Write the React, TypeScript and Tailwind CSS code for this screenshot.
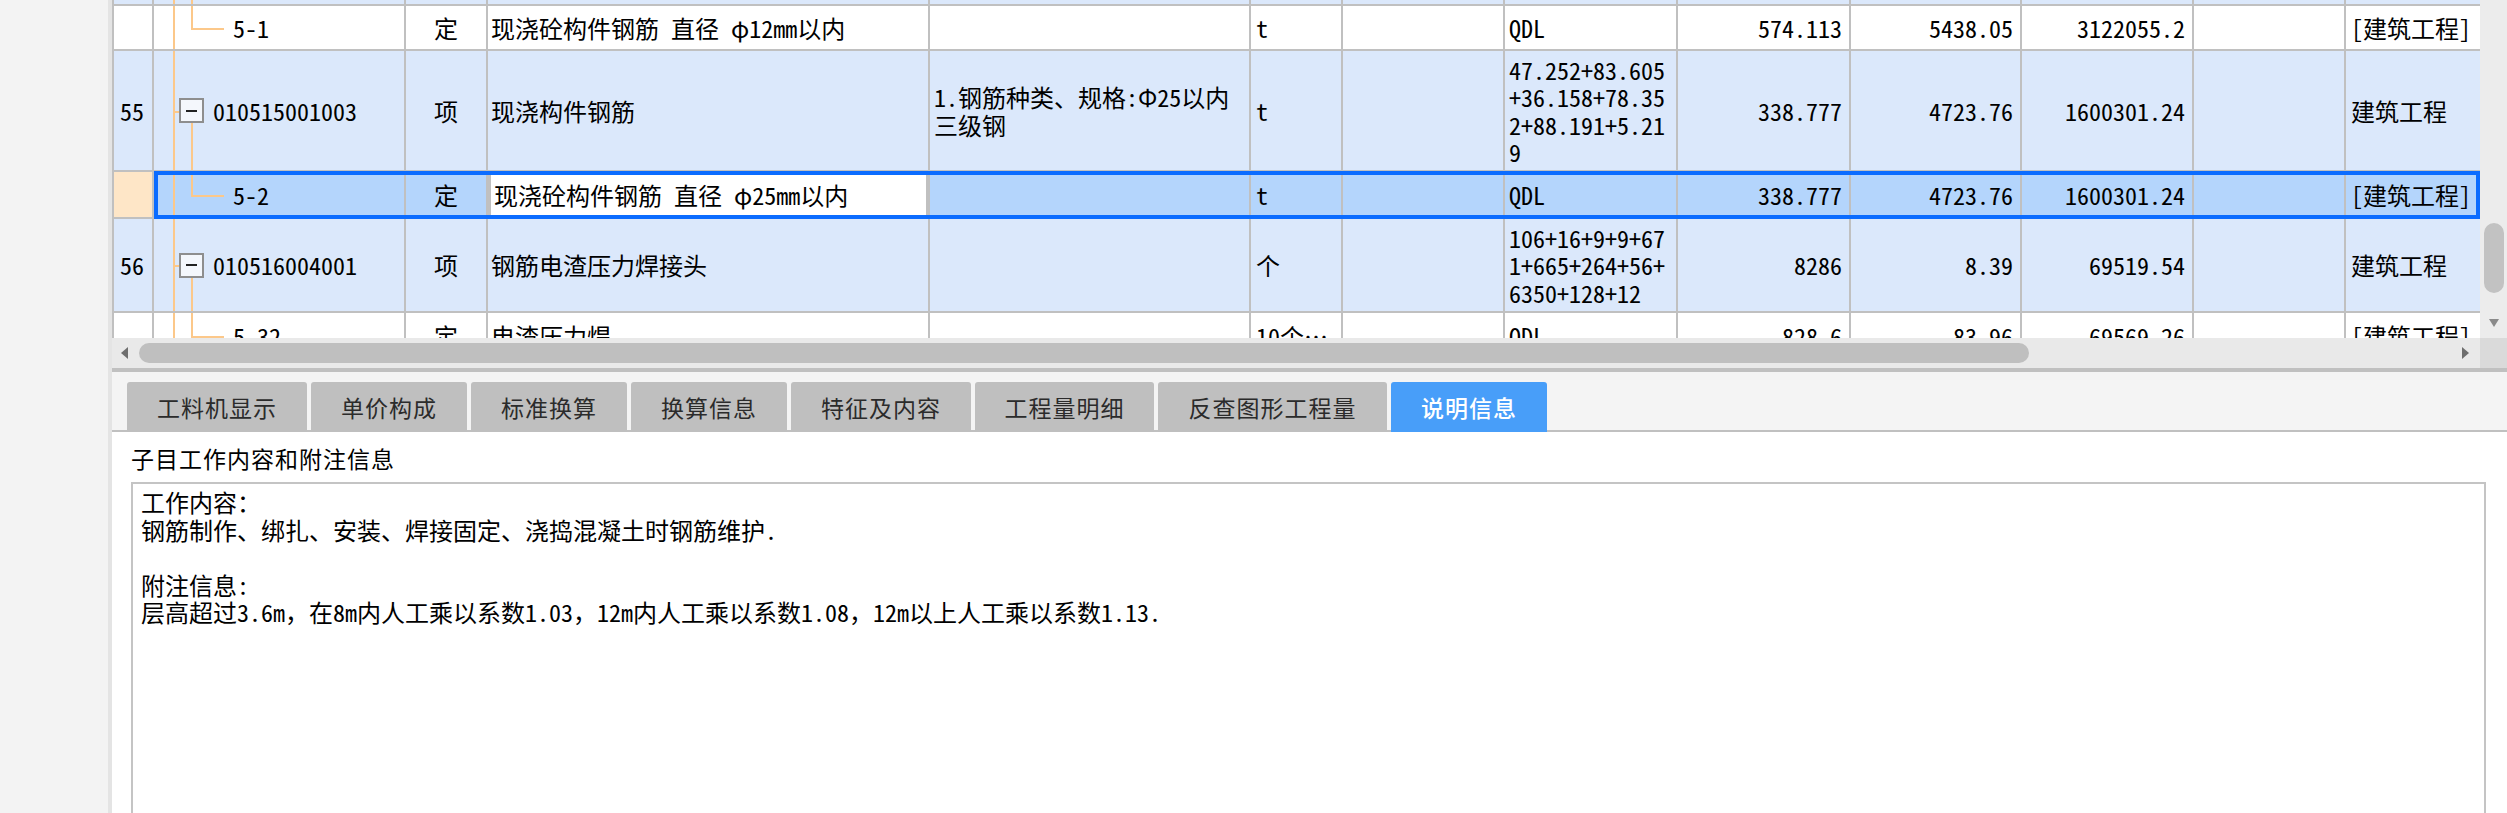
import React from "react";

const mono = "font-['Noto_Sans_Mono_CJK_SC','Noto_Sans_CJK_SC','Liberation_Mono',monospace]";
const sans = "font-['Noto_Sans_CJK_SC','Noto_Sans',sans-serif]";

type Row = {
  h: string;
  bg: string;
  num?: string;
  kind: "item" | "child" | "stub";
  code?: string;
  type?: string;
  name?: string;
  feature?: string[];
  unit?: string;
  expr?: string[];
  qty?: string;
  price?: string;
  total?: string;
  cat?: string;
  selected?: boolean;
};

const rows: Row[] = [
  { h: "h-[6px]", bg: "bg-[#dbe8fb]", kind: "stub" },
  {
    h: "h-[45px]",
    bg: "bg-white",
    kind: "child",
    code: "5-1",
    type: "定",
    name: "现浇砼构件钢筋 直径 φ12mm以内",
    unit: "t",
    expr: ["QDL"],
    qty: "574.113",
    price: "5438.05",
    total: "3122055.2",
    cat: "[建筑工程]",
  },
  {
    h: "h-[121px]",
    bg: "bg-[#dbe8fb]",
    num: "55",
    kind: "item",
    code: "010515001003",
    type: "项",
    name: "现浇构件钢筋",
    feature: ["1.钢筋种类、规格:Φ25以内", "三级钢"],
    unit: "t",
    expr: ["47.252+83.605", "+36.158+78.35", "2+88.191+5.21", "9"],
    qty: "338.777",
    price: "4723.76",
    total: "1600301.24",
    cat: "建筑工程",
  },
  {
    h: "h-[47px]",
    bg: "bg-[#b4d5fc]",
    kind: "child",
    code: "5-2",
    type: "定",
    name: "现浇砼构件钢筋 直径 φ25mm以内",
    unit: "t",
    expr: ["QDL"],
    qty: "338.777",
    price: "4723.76",
    total: "1600301.24",
    cat: "[建筑工程]",
    selected: true,
  },
  {
    h: "h-[94px]",
    bg: "bg-[#dbe8fb]",
    num: "56",
    kind: "item",
    code: "010516004001",
    type: "项",
    name: "钢筋电渣压力焊接头",
    unit: "个",
    expr: ["106+16+9+9+67", "1+665+264+56+", "6350+128+12"],
    qty: "8286",
    price: "8.39",
    total: "69519.54",
    cat: "建筑工程",
  },
  {
    h: "h-[48px]",
    bg: "bg-white",
    kind: "child",
    code: "5-32",
    type: "定",
    name: "电渣压力焊",
    unit: "10个…",
    expr: ["QDL"],
    qty: "828.6",
    price: "83.96",
    total: "69569.26",
    cat: "[建筑工程]",
  },
];

const cell = "shrink-0 h-full border-r-2 border-[#c0c0c0] flex items-center overflow-hidden";

function TreeCell({ r }: { r: Row }) {
  return (
    <div className={`${cell} relative w-[252px] whitespace-nowrap`}>
      <div className="absolute left-[19px] top-0 bottom-0 w-[2px] bg-[#fcc88a]" />
      {r.kind === "stub" && <div className="absolute left-[37px] top-0 bottom-0 w-[2px] bg-[#fcc88a]" />}
      {r.kind === "item" && (
        <>
          <div className="absolute left-[21px] top-1/2 w-[4px] h-[2px] bg-[#fcc88a]" />
          <div className="absolute left-[37px] top-1/2 bottom-0 w-[2px] bg-[#fcc88a]" />
          <div className="relative ml-[25px] w-[25px] h-[25px] border-2 border-[#8e8e8e] bg-[#f4f7fc] flex items-center justify-center">
            <div className="w-[11px] h-[2px] bg-[#222]" />
          </div>
          <span className="ml-[9px]">{r.code}</span>
        </>
      )}
      {r.kind === "child" && (
        <>
          <div className="absolute left-[37px] top-0 h-1/2 w-[2px] bg-[#fcc88a]" />
          <div className="absolute left-[37px] top-1/2 w-[33px] h-[2px] bg-[#fcc88a]" />
          <span className="ml-[79px]">{r.code}</span>
        </>
      )}
    </div>
  );
}

function TableRow({ r }: { r: Row }) {
  const numBg = r.selected ? "bg-[#fee6c7]" : r.bg;
  return (
    <div className={`relative flex ${r.h} border-b-2 border-l-2 border-[#c0c0c0] ${r.bg}`}>
      <div className={`${cell} w-[40px] pl-[6px] ${numBg}`}>{r.num}</div>
      <TreeCell r={r} />
      <div className={`${cell} w-[82px] justify-center`}>{r.type}</div>
      <div
        className={`${cell} w-[442px] pl-[3px] whitespace-nowrap ${
          r.selected ? "bg-white border-l-[3px] border-r-[4px] border-[#0b6cff]" : ""
        }`}
      >
        {r.name}
      </div>
      <div className={`${cell} w-[321px] pl-[4px]`}>
        <div>
          {r.feature?.map((f) => (
            <div key={f}>{f}</div>
          ))}
        </div>
      </div>
      <div className={`${cell} w-[92px] pl-[5px] whitespace-nowrap`}>{r.unit}</div>
      <div className={`${cell} w-[162px]`} />
      <div className={`${cell} w-[173px] pl-[4px]`}>
        <div>
          {r.expr?.map((e) => (
            <div key={e}>{e}</div>
          ))}
        </div>
      </div>
      <div className={`${cell} w-[173px] justify-end pr-[7px]`}>{r.qty}</div>
      <div className={`${cell} w-[171px] justify-end pr-[7px]`}>{r.price}</div>
      <div className={`${cell} w-[172px] justify-end pr-[7px]`}>{r.total}</div>
      <div className={`${cell} w-[152px]`} />
      <div className="shrink-0 h-full w-[134px] pl-[5px] flex items-center whitespace-nowrap">{r.cat}</div>
      {r.selected && (
        <div className="pointer-events-none absolute left-[40px] right-0 top-[-1px] bottom-[-2px] border-[4px] border-[#0b6cff]" />
      )}
    </div>
  );
}

const tabs = [
  { label: "工料机显示", w: "w-[180px]" },
  { label: "单价构成", w: "w-[156px]" },
  { label: "标准换算", w: "w-[156px]" },
  { label: "换算信息", w: "w-[156px]" },
  { label: "特征及内容", w: "w-[180px]" },
  { label: "工程量明细", w: "w-[179px]" },
  { label: "反查图形工程量", w: "w-[229px]" },
  { label: "说明信息", w: "w-[156px]", active: true },
];

export default function App() {
  return (
    <div className="flex h-[813px] w-[2507px] overflow-hidden bg-white text-black">
      {/* left panel */}
      <div className="w-[108px] shrink-0 bg-[#f3f3f3]" />
      <div className="w-[4px] shrink-0 bg-[#e4e4e4]" />

      <div className="flex flex-1 flex-col min-w-0">
        {/* grid */}
        <div className="flex h-[338px] shrink-0">
          <div className={`w-[2368px] h-full overflow-hidden text-[24px] leading-[27.5px] ${mono}`}>
            {rows.map((r, i) => (
              <TableRow key={i} r={r} />
            ))}
          </div>
          {/* vertical scrollbar */}
          <div className="w-[27px] h-full bg-[#ececec] flex flex-col items-center pt-[223px]">
            <div className="w-[20px] h-[70px] rounded-full bg-[#c2c2c2]" />
            <svg className="mt-[25px]" width="12" height="10" viewBox="0 0 12 10">
              <path d="M1 1 L11 1 L6 9 Z" fill="#8a8a8a" />
            </svg>
          </div>
        </div>

        {/* horizontal scrollbar */}
        <div className="flex h-[30px] shrink-0">
          <div className="flex flex-1 items-center bg-[#e9e9e9]">
            <svg className="ml-[9px]" width="8" height="12" viewBox="0 0 8 12">
              <path d="M7 0 L7 12 L0 6 Z" fill="#6e6e6e" />
            </svg>
            <div className="ml-[10px] h-[20px] w-[1890px] rounded-full bg-[#bfbfbf]" />
            <div className="flex-1" />
            <svg className="mr-[10px]" width="8" height="12" viewBox="0 0 8 12">
              <path d="M0 0 L0 12 L7 6 Z" fill="#6e6e6e" />
            </svg>
          </div>
          <div className="w-[27px] bg-[#dadada]" />
        </div>
        <div className="h-[4px] shrink-0 bg-[#c0c0c0]" />

        {/* tabs */}
        <div className={`flex h-[60px] shrink-0 items-end gap-[4px] pl-[15px] bg-[#f4f4f4] shadow-[inset_0_-2px_0_#c0c0c0] ${sans}`}>
          {tabs.map((t) => (
            <div
              key={t.label}
              className={`${t.w} h-[50px] shrink-0 rounded-t-[3px] flex items-center justify-center text-[23px] tracking-[1px] ${
                t.active ? "bg-[#489ef9] text-white font-medium" : "bg-[#bfbfbf] text-[#2b2b2b]"
              }`}
            >
              {t.label}
            </div>
          ))}
        </div>

        {/* description */}
        <div className="flex flex-1 flex-col bg-white">
          <div className={`ml-[19px] mt-[10px] h-[32px] leading-[32px] text-[23px] tracking-[1px] ${sans}`}>
            子目工作内容和附注信息
          </div>
          <div
            className={`ml-[19px] mr-[21px] mt-[8px] h-[420px] shrink-0 border-2 border-[#c4c4c4] pl-[8px] pt-[4px] text-[24px] leading-[27.5px] ${mono}`}
          >
            <div>工作内容：</div>
            <div>钢筋制作、绑扎、安装、焊接固定、浇捣混凝土时钢筋维护.</div>
            <div className="h-[27.5px]" />
            <div>附注信息:</div>
            <div>层高超过3.6m，在8m内人工乘以系数1.03，12m内人工乘以系数1.08，12m以上人工乘以系数1.13.</div>
          </div>
        </div>
      </div>
    </div>
  );
}
